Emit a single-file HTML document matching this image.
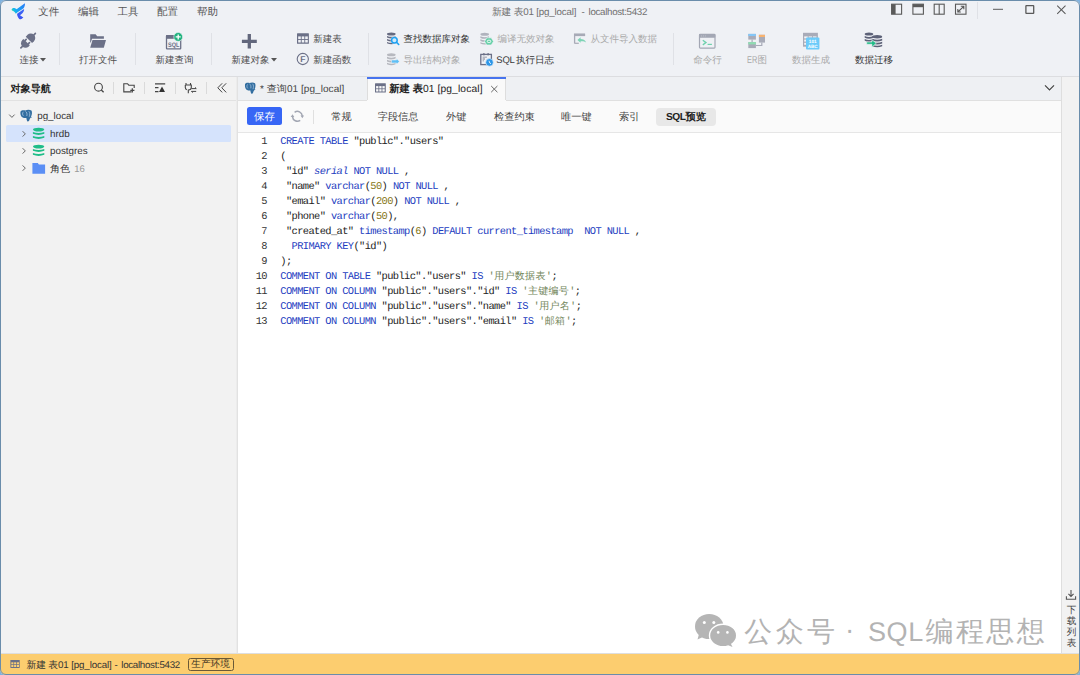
<!DOCTYPE html>
<html><head><meta charset="utf-8">
<style>
*{box-sizing:border-box;margin:0;padding:0}
html,body{width:1080px;height:675px;overflow:hidden;background:#7fb2e0}
body{font-family:"Liberation Sans",sans-serif;position:relative;text-rendering:geometricPrecision}
.a{position:absolute;white-space:pre}
svg.a{overflow:visible}
#win{position:absolute;left:0;top:0;width:1080px;height:675px;border-radius:6px;overflow:hidden;background:#eff1f5}
#frame{position:absolute;left:0;top:0;width:1080px;height:675px;border:1px solid #6a8dab;border-radius:6px;pointer-events:none}
.menu{font-size:10.5px;color:#555;top:6px;line-height:13px}
.tl{font-size:9.5px;color:#4f4f4f;line-height:12px}
.tg{font-size:9.5px;color:#a9a9a9;line-height:12px}
.sep{position:absolute;width:1px;background:#dfe1e6}
.et{font-size:10.2px;line-height:13px;color:#444;top:111px}
#code{position:absolute;left:280.3px;top:134.8px;font-family:"Liberation Mono",monospace;font-size:10.4px;letter-spacing:-0.61px;line-height:15px;color:#222;white-space:pre}
#lns{position:absolute;left:241px;top:134.8px;width:26px;text-align:right;font-family:"Liberation Mono",monospace;font-size:10.4px;letter-spacing:-0.61px;line-height:15px;color:#333;white-space:pre}
.k{color:#1c3cc0}
.n{color:#857514}
.s{color:#72865a}
.cj{letter-spacing:0.32px;font-size:10px;font-weight:300}
</style></head><body>
<div id="win">
  <!-- logo -->
  <svg class="a" style="left:0;top:0" width="30" height="22" viewBox="0 0 30 22">
    <defs><linearGradient id="lg" gradientUnits="userSpaceOnUse" x1="11.5" y1="10" x2="25" y2="3"><stop offset="0" stop-color="#2ad8a8"/><stop offset="0.2" stop-color="#14b0f4"/><stop offset="1" stop-color="#2a78f6"/></linearGradient>
    <linearGradient id="lg2" gradientUnits="userSpaceOnUse" x1="24" y1="9" x2="18" y2="19"><stop offset="0" stop-color="#3d6cf7"/><stop offset="1" stop-color="#3a50f2"/></linearGradient></defs>
    <path d="M11.6 9.6 C11.8 8.3 13.5 7.6 15 8.2 C15.8 8.5 16.3 8.9 16.6 9.3 L24.9 3.2 C25.2 5 24.5 7.2 23.3 8.6 L17.2 12.6 C16.6 13.3 16.1 13.8 15.8 13.8 C15 12.5 14.2 11.4 13.2 11 C12.2 10.8 11.6 10.3 11.6 9.6 Z" fill="url(#lg)"/>
    <path d="M17.4 13.6 L23.6 9.3 C24.2 9.2 24.3 9.8 24 10.6 C23.3 12.6 21.8 14.2 20 15.2 L23.4 17.5 C22 19 20.5 19.4 19.6 19.3 C18.2 18 17.3 16.3 17.1 14.6 C17.1 14.2 17.2 13.8 17.4 13.6 Z" fill="url(#lg2)"/>
  </svg>
  <div class="a menu" style="left:38.3px">文件</div>
  <div class="a menu" style="left:78px">编辑</div>
  <div class="a menu" style="left:117.5px">工具</div>
  <div class="a menu" style="left:157px">配置</div>
  <div class="a menu" style="left:197px">帮助</div>
  <div class="a" style="left:492px;top:7px;font-size:9.75px;line-height:12px;color:#6f6f6f;letter-spacing:-0.17px">新建 表01 [pg_local]</div>
  <div class="a" style="left:581.5px;top:7px;font-size:9.75px;line-height:12px;color:#6f6f6f">-</div>
  <div class="a" style="left:588.6px;top:7px;font-size:9.75px;line-height:12px;color:#6f6f6f;letter-spacing:-0.32px">localhost:5432</div>

  <!-- window controls -->
  <svg class="a" style="left:0;top:0" width="1080" height="22">
    <g fill="none" stroke="#5a5a5a" stroke-width="1.1">
      <rect x="891.6" y="4.2" width="10" height="10"/>
      <rect x="912.9" y="4.2" width="10.5" height="10"/>
      <rect x="934.2" y="4.2" width="10" height="10"/>
      <line x1="939.2" y1="4.2" x2="939.2" y2="14.2"/>
      <rect x="955.5" y="4.2" width="10.5" height="10"/>
      <path d="M957.8 12 L963.8 6.3 M960.8 6.3 H963.8 V9.3 M957.8 9 V12 H960.8"/>
      <line x1="993" y1="9.3" x2="1003" y2="9.3" stroke-width="1"/>
      <rect x="1025.9" y="5.6" width="7.8" height="7.8" stroke-width="1.3" rx="0.5"/>
      <path d="M1057.2 5.7 L1065.5 13.9 M1065.5 5.7 L1057.2 13.9" stroke-width="1.05"/>
    </g>
    <rect x="891.6" y="4.2" width="4" height="10" fill="#5a5a5a"/>
    <rect x="912.9" y="4.2" width="10.5" height="3" fill="#5a5a5a"/>
  </svg>
  <div class="sep" style="left:977px;top:2px;height:16.5px"></div>

  <!-- toolbar separators -->
  <div class="sep" style="left:59px;top:33px;height:32px"></div>
  <div class="sep" style="left:135px;top:33px;height:32px"></div>
  <div class="sep" style="left:211px;top:33px;height:32px"></div>
  <div class="sep" style="left:368px;top:33px;height:32px"></div>
  <div class="sep" style="left:673px;top:33px;height:32px"></div>

  <!-- toolbar icons -->
  <svg class="a" style="left:0;top:25px" width="1080" height="50" viewBox="0 25 1080 50">
    <!-- plug -->
    <g fill="#6b7087" transform="translate(28.2 40.6) rotate(45)">
      <rect x="-0.85" y="-11" width="1.7" height="4" rx="0.85"/>
      <path d="M-4.5 -1 H4.5 V-3.6 A4.5 4.5 0 0 0 -4.5 -3.6 Z"/>
      <rect x="-3.2" y="-0.3" width="1.7" height="3" rx="0.8"/>
      <rect x="1.5" y="-0.3" width="1.7" height="3" rx="0.8"/>
      <path d="M-4.5 2.2 H4.5 V3.8 A4.5 4.5 0 0 1 -4.5 3.8 Z"/>
      <rect x="-0.85" y="7.3" width="1.7" height="3.9" rx="0.85"/>
    </g>
    <!-- folder open -->
    <g fill="#6b7087">
      <path d="M90.2 34.3 H95.6 L97.2 36.2 H103.9 V38.7 H92 L90.8 42.5 H90.2 Z"/>
      <path d="M92.5 40 H106 L103.8 47.8 H90.2 Z"/>
    </g>
    <!-- new query SQL -->
    <g>
      <rect x="166.5" y="35.6" width="14.2" height="13.2" fill="none" stroke="#6b7087" stroke-width="1.3" rx="0.6"/>
      <rect x="166" y="35.2" width="15.2" height="3.6" fill="#6b7087"/>
      <text x="168" y="46.8" font-family="Liberation Sans" font-size="6.6" font-weight="bold" fill="#6b7087" textLength="11.4" lengthAdjust="spacingAndGlyphs">SQL</text>
      <circle cx="178.2" cy="36.9" r="4.4" fill="#20b27e" stroke="#eff1f5" stroke-width="0.6"/>
      <path d="M178.2 34.4 V39.4 M175.7 36.9 H180.7" stroke="#fff" stroke-width="1.3"/>
    </g>
    <!-- plus -->
    <path d="M249.3 34 V48.6 M241.9 41.3 H256.8" stroke="#62677c" stroke-width="3.3"/>
    <!-- small table -->
    <g>
      <rect x="297" y="33.3" width="11.9" height="10.5" fill="#6b7087" rx="0.5"/>
      <g fill="#eff1f5">
        <rect x="298.2" y="36.4" width="2.6" height="2.6"/><rect x="301.7" y="36.4" width="2.6" height="2.6"/><rect x="305.2" y="36.4" width="2.6" height="2.6"/>
        <rect x="298.2" y="39.9" width="2.6" height="2.6"/><rect x="301.7" y="39.9" width="2.6" height="2.6"/><rect x="305.2" y="39.9" width="2.6" height="2.6"/>
      </g>
    </g>
    <!-- F circle -->
    <circle cx="302.8" cy="59" r="5.6" fill="none" stroke="#6b7087" stroke-width="1.1"/>
    <text x="302.9" y="62.4" font-family="Liberation Sans" font-size="8.5" font-weight="bold" fill="#6b7087" text-anchor="middle">F</text>
    <!-- db search -->
    <g fill="#656a80">
      <ellipse cx="391.3" cy="33.9" rx="4.3" ry="1.5"/>
      <path d="M387 35.9 Q391.3 37.8 395.6 35.9 V37.6 Q391.3 39.5 387 37.6 Z"/>
      <path d="M387 38.9 Q391.3 40.8 395.6 38.9 V40.6 Q391.3 42.5 387 40.6 Z"/>
      <path d="M387 41.9 Q391.3 43.8 395.6 41.9 V43.3 Q391.3 45.2 387 43.3 Z"/>
    </g>
    <circle cx="394.4" cy="40.2" r="3.6" fill="#eff1f5"/>
    <circle cx="394.4" cy="40.2" r="2.8" fill="#cfe9fb" stroke="#1ea1f2" stroke-width="1.5"/>
    <path d="M396.5 42.3 L398.7 44.5" stroke="#1ea1f2" stroke-width="1.6" stroke-linecap="round"/>
    <!-- db export -->
    <g fill="#b6b8bf">
      <ellipse cx="391.3" cy="54.8" rx="4.3" ry="1.5"/>
      <path d="M387 56.8 Q391.3 58.7 395.6 56.8 V58.5 Q391.3 60.4 387 58.5 Z"/>
      <path d="M387 59.8 Q391.3 61.7 395.6 59.8 V61.5 Q391.3 63.4 387 61.5 Z"/>
      <path d="M387 62.8 Q391.3 64.7 395.6 62.8 V64.2 Q391.3 66.1 387 64.2 Z"/>
    </g>
    <path d="M391.5 60 H396.5 V58.6 L399.4 61.5 L396.5 64.3 V62.9 H391.5 Z" fill="#5fbff5" stroke="#eff1f5" stroke-width="0.5"/>
    <!-- db compile -->
    <g fill="#b0b3bd">
      <ellipse cx="484.7" cy="34.2" rx="4.3" ry="1.5"/>
      <path d="M480.4 36.2 Q484.7 38.1 489 36.2 V37.9 Q484.7 39.8 480.4 37.9 Z"/>
      <path d="M480.4 39.2 Q484.7 41.1 489 39.2 V40.9 Q484.7 42.8 480.4 40.9 Z"/>
      <path d="M480.4 42.2 Q484.7 44.1 489 42.2 V43.6 Q484.7 45.5 480.4 43.6 Z"/>
    </g>
    <path d="M486.7 37.8 H491.3 L493.5 41.4 L491.3 45 H486.7 L484.5 41.4 Z" fill="#66d0a8" stroke="#eff1f5" stroke-width="0.7"/>
    <rect x="487.3" y="40.3" width="3.4" height="2.2" rx="1" fill="none" stroke="#fff" stroke-width="0.9"/>
    <!-- sql log -->
    <g>
      <rect x="480.8" y="54.4" width="10.6" height="10.2" fill="none" stroke="#6b7087" stroke-width="1.3"/>
      <rect x="483.3" y="53" width="1.2" height="2.4" fill="#6b7087"/><rect x="487.5" y="53" width="1.2" height="2.4" fill="#6b7087"/>
      <path d="M482.6 56.5 H486.9 V58 H485 V60 H484 V61.5 H482.6 Z" fill="#b4b7c2"/>
      <circle cx="489.5" cy="62.4" r="3.8" fill="#2c96e8" stroke="#eff1f5" stroke-width="0.6"/>
      <path d="M489 60.8 L489.8 63 L491 63.8" stroke="#fff" stroke-width="0.8" fill="none"/>
    </g>
    <!-- import from file -->
    <g>
      <path d="M574.6 43.6 V34.3 H584.5 V36" fill="none" stroke="#a7aab6" stroke-width="1.3"/>
      <rect x="574" y="33.6" width="11" height="2.5" fill="#a7aab6"/>
      <path d="M574.6 43.3 H578.8" stroke="#a7aab6" stroke-width="1.2"/>
      <path d="M577.4 40.1 L580.6 37.2 V38.9 C583 38.9 585 39.8 586.1 42.4 C584.8 41.3 583 41.1 580.6 41.2 V42.8 Z" fill="#7dd3b5"/>
    </g>
    <!-- command line -->
    <g>
      <rect x="699.5" y="34.4" width="15.5" height="13.7" fill="none" stroke="#a3a7b4" stroke-width="1.2" rx="0.8"/>
      <rect x="699" y="33.9" width="16.3" height="3.9" fill="#a3a7b4" rx="0.8"/>
      <circle cx="701.4" cy="35.9" r="0.45" fill="#e6e8ee"/><circle cx="703.3" cy="35.9" r="0.45" fill="#e6e8ee"/><circle cx="705.3" cy="35.9" r="0.45" fill="#e6e8ee"/>
      <path d="M702.8 40.3 L706 42.6 L702.8 44.9" fill="none" stroke="#6fd1ad" stroke-width="1.3"/>
      <path d="M707.6 44.4 H711.9" stroke="#6fd1ad" stroke-width="1.2"/>
    </g>
    <!-- ER -->
    <g>
      <path d="M752.1 39.6 V42.1 M755.9 45.5 H761.8 V42.6" fill="none" stroke="#a8abb8" stroke-width="1.2"/>
      <rect x="748.3" y="33.9" width="7.6" height="5.7" fill="#a8abb8"/>
      <rect x="748.3" y="33.9" width="7.6" height="2.1" fill="#84c6f7"/>
      <rect x="748.3" y="42.1" width="7.6" height="6" fill="#a8abb8"/>
      <rect x="748.3" y="42.1" width="7.6" height="2.3" fill="#8fdcb2"/>
      <rect x="758.9" y="34.8" width="6.1" height="7.8" fill="#a8abb8"/>
      <rect x="758.9" y="34.8" width="6.1" height="2.2" fill="#f7b26f"/>
    </g>
    <!-- data gen -->
    <g>
      <rect x="803" y="32.8" width="14.9" height="13.9" fill="#a8abb8"/>
      <g fill="#f3f4f7"><rect x="804.2" y="36.4" width="3.5" height="2"/><rect x="804.2" y="39.6" width="3.5" height="2"/><rect x="804.2" y="42.8" width="3.5" height="2"/><rect x="808.6" y="36.4" width="3.5" height="1.2"/><rect x="813" y="36.4" width="3.5" height="1.2"/></g>
      <rect x="806" y="37.6" width="13.4" height="11.8" fill="#6ccbfa" rx="1"/>
      <text x="812.7" y="42.8" font-family="Liberation Sans" font-size="4.6" font-weight="bold" fill="#fff" text-anchor="middle">101</text>
      <text x="812.7" y="47.7" font-family="Liberation Sans" font-size="4.6" font-weight="bold" fill="#fff" text-anchor="middle">ABC</text>
    </g>
    <!-- migration -->
    <g transform="translate(-0.9 -0.6)"><g fill="#5d6278">
      <ellipse cx="869.9" cy="34.6" rx="4.3" ry="1.6"/>
      <path d="M865.6 36.6 Q869.9 38.5 874.2 36.6 V38.3 Q869.9 40.2 865.6 38.3 Z"/>
      <path d="M865.6 39.6 Q869.9 41.5 874.2 39.6 V41.3 Q869.9 43.2 865.6 41.3 Z"/>
      <ellipse cx="878.1" cy="37.3" rx="5" ry="1.7"/>
      <path d="M873.1 39.4 Q878.1 41.4 883.1 39.4 V41.2 Q878.1 43.2 873.1 41.2 Z"/>
      <path d="M873.1 42.4 Q878.1 44.4 883.1 42.4 V44.2 Q878.1 46.2 873.1 44.2 Z"/>
      <path d="M873.1 45.4 Q878.1 47.4 883.1 45.4 V46.8 Q878.1 48.8 873.1 46.8 Z"/>
    </g>
    <path d="M867.6 42.6 H872.8 V40.3 L877.2 43.8 L872.8 47.8 V44.9 H867.6 Z" fill="#22bb88" stroke="#eff1f5" stroke-width="0.6"/></g>
  </svg>

  <!-- toolbar labels -->
  <div class="a tl" style="left:19.5px;top:55px">连接</div>
  <svg class="a" style="left:39.8px;top:58px" width="7" height="5"><path d="M0 0 H6 L3 3.6 Z" fill="#555"/></svg>
  <div class="a tl" style="left:79px;top:55px">打开文件</div>
  <div class="a tl" style="left:155.5px;top:55px">新建查询</div>
  <div class="a tl" style="left:231.5px;top:55px">新建对象</div>
  <svg class="a" style="left:271.3px;top:58px" width="7" height="5"><path d="M0 0 H6 L3 3.6 Z" fill="#555"/></svg>
  <div class="a tl" style="left:313.3px;top:34px">新建表</div>
  <div class="a tl" style="left:313.3px;top:54.5px">新建函数</div>
  <div class="a tl" style="left:403.5px;top:34px;color:#333">查找数据库对象</div>
  <div class="a tg" style="left:403.5px;top:54.5px">导出结构对象</div>
  <div class="a tg" style="left:497.5px;top:34px">编译无效对象</div>
  <div class="a tl" style="left:496.3px;top:54.5px;color:#3a3a3a;letter-spacing:-0.25px">SQL</div>
  <div class="a tl" style="left:516px;top:54.5px;color:#333">执行日志</div>
  <div class="a tg" style="left:590.5px;top:34px">从文件导入数据</div>
  <div class="a tg" style="left:693.3px;top:55px">命令行</div>
  <div class="a tg" style="left:747px;top:54.5px;font-size:10px;transform:scaleX(0.74);transform-origin:0 0">ER</div>
  <div class="a tg" style="left:757.5px;top:55px">图</div>
  <div class="a tg" style="left:792px;top:55px">数据生成</div>
  <div class="a tl" style="left:855px;top:55px;color:#333">数据迁移</div>

  <!-- toolbar bottom border -->
  <div class="a" style="left:0;top:76px;width:1080px;height:1px;background:#dcdde0"></div>

  <!-- left panel -->
  <div class="a" style="left:0;top:77px;width:237px;height:577px;background:#f2f2f2"></div>
  <div class="a" style="left:0;top:100px;width:237px;height:1px;background:#e2e2e2"></div>
  <div class="a" style="left:236px;top:77px;width:1px;height:577px;background:#ececec"></div>
  <div class="a" style="left:237px;top:77px;width:1px;height:577px;background:#e2e2e2"></div>
  <div class="a" style="left:10.5px;top:83.2px;font-size:10.1px;line-height:13px;font-weight:bold;color:#222">对象导航</div>
  <svg class="a" style="left:0;top:77px" width="237" height="23" viewBox="0 77 237 23">
    <g fill="none" stroke="#444" stroke-width="1.1">
      <circle cx="98.5" cy="87.2" r="3.9"/>
      <path d="M101.3 90 L103.6 92.3" stroke-width="1.3"/>
      <path d="M131.5 91.9 H123.8 V83.7 H127.5 L128.8 85.2 H134.2 V88" />
      <path d="M132.3 88.3 V92.4 M130.3 90.4 H134.4" stroke-width="1.2"/>
      <path d="M155 83.9 H165.2" stroke-width="1.4"/>
      <path d="M155 87.7 H158.5 M155 91.6 H158.5" stroke-width="1.2"/>
      <path d="M186 83 V84.8 M190.5 83 V84.8 M185.3 85 H191.3 V87.5 C191.3 89.2 190 90 188.3 90 V93.2 M185.3 85 V87.5 C185.3 88.5 185.8 89.3 186.8 89.7" stroke-width="1.1"/>
      <path d="M191.5 88.6 H196.2 M195 87.4 L196.3 88.6 M191.5 91.4 H196.2 M192.7 92.6 L191.4 91.4" stroke-width="1"/>
      <path d="M222.2 83.3 L217.8 87.8 L222.2 92.4 M226.2 83.3 L221.8 87.8 L226.2 92.4" stroke-width="1"/>
    </g>
    <path d="M159 92 L162 86.6 L165 92 Z" fill="#333"/>
  </svg>
  <div class="sep" style="left:113px;top:82px;height:12px;background:#dadada"></div>
  <div class="sep" style="left:144px;top:82px;height:12px;background:#dadada"></div>
  <div class="sep" style="left:175px;top:82px;height:12px;background:#dadada"></div>
  <div class="sep" style="left:206px;top:82px;height:12px;background:#dadada"></div>

  <!-- tree -->
  <div class="a" style="left:6px;top:125px;width:224.5px;height:17px;background:#d5e3fc;border-radius:1.5px"></div>
  <svg class="a" style="left:0;top:105px" width="237" height="75" viewBox="0 105 237 75">
    <path d="M9.2 114.6 L11.9 117.4 L14.6 114.6" fill="none" stroke="#666" stroke-width="1"/>
    <path d="M22.6 131.2 L25.3 133.9 L22.6 136.6 M22.6 148.2 L25.3 150.9 L22.6 153.6 M22.6 165.4 L25.3 168.1 L22.6 170.8" fill="none" stroke="#666" stroke-width="1"/>
    <!-- elephant -->
    <g transform="translate(17.14 107.36) scale(1.1 1.02)"><path d="M3 4.5 C3 2.8 5.5 2.4 7.5 3 C9 2.3 11.5 2.1 13 3.2 C13.8 4.5 13.6 7.5 12.6 9.2 L13.6 9.8 L12.2 10.2 C11.6 11 11.2 12 11 13 C10.7 13.8 9.8 14 9.2 13.5 C8.6 12.5 8.5 11.5 8.4 10.4 C6.5 10.8 4.5 10.2 3.6 8.5 C3 7.3 2.9 5.8 3 4.5 Z" fill="#336ea0"/>
    <path d="M5.6 4.4 C4.6 5.5 4.8 7.6 5.8 8.4 M7.6 4 C8.8 4.6 9.2 6.2 8.8 8.4 M10.6 3.8 C11.7 5 11.7 7.2 11 9.2" fill="none" stroke="#a9c6e2" stroke-width="0.75"/></g>
    <!-- db icons -->
    <g fill="#1fbd88">
      <ellipse cx="38.6" cy="129.6" rx="5.65" ry="1.9"/>
      <path d="M32.9 131.9 Q38.6 134.2 44.3 131.9 V133.8 Q38.6 136.1 32.9 133.8 Z"/>
      <path d="M32.9 135.9 Q38.6 138.2 44.3 135.9 V137.8 Q38.6 140.1 32.9 137.8 Z"/>
      <ellipse cx="38.6" cy="146.6" rx="5.65" ry="1.9"/>
      <path d="M32.9 148.9 Q38.6 151.2 44.3 148.9 V150.8 Q38.6 153.1 32.9 150.8 Z"/>
      <path d="M32.9 152.9 Q38.6 155.2 44.3 152.9 V154.8 Q38.6 157.1 32.9 154.8 Z"/>
    </g>
    <path d="M32.4 163.1 H37.8 L38.9 164.5 H45.1 V173.7 H32.4 Z" fill="#5b8ff5"/>
  </svg>
  <div class="a" style="left:37.2px;top:110px;font-size:9.8px;line-height:13px;color:#333">pg_local</div>
  <div class="a" style="left:50px;top:128px;font-size:9.8px;line-height:13px;color:#333">hrdb</div>
  <div class="a" style="left:50px;top:145px;font-size:9.8px;line-height:13px;color:#333">postgres</div>
  <div class="a" style="left:50px;top:162.5px;font-size:10px;line-height:13px;color:#333">角色 <span style="font-size:9.5px;color:#999;margin-left:1.5px">16</span></div>

  <!-- tab bar -->
  <div class="a" style="left:238px;top:77px;width:823px;height:23px;background:#eef0f3"></div>
  <div class="a" style="left:238px;top:100px;width:823px;height:1px;background:#e0e0e0"></div>
  <div class="a" style="left:367px;top:77px;width:139px;height:24px;background:#f9f9f9;border-left:1px solid #ddd;border-right:1px solid #ddd"></div>
  <div class="a" style="left:367px;top:77px;width:139px;height:2px;background:#4673ee"></div>
  <svg class="a" style="left:238px;top:77px" width="823" height="23" viewBox="238 77 823 23">
    <g transform="translate(242 80)"><path d="M3 4.5 C3 2.8 5.5 2.4 7.5 3 C9 2.3 11.5 2.1 13 3.2 C13.8 4.5 13.6 7.5 12.6 9.2 L13.6 9.8 L12.2 10.2 C11.6 11 11.2 12 11 13 C10.7 13.8 9.8 14 9.2 13.5 C8.6 12.5 8.5 11.5 8.4 10.4 C6.5 10.8 4.5 10.2 3.6 8.5 C3 7.3 2.9 5.8 3 4.5 Z" fill="#336ea0"/>
    <path d="M5.6 4.4 C4.6 5.5 4.8 7.6 5.8 8.4 M7.6 4 C8.8 4.6 9.2 6.2 8.8 8.4 M10.6 3.8 C11.7 5 11.7 7.2 11 9.2" fill="none" stroke="#a9c6e2" stroke-width="0.75"/></g>
    <rect x="375" y="83.3" width="10.8" height="9.2" fill="#6b7087" rx="0.5"/>
    <g fill="#f9f9f9">
      <rect x="376.1" y="86.1" width="2.3" height="2.3"/><rect x="379.25" y="86.1" width="2.3" height="2.3"/><rect x="382.4" y="86.1" width="2.3" height="2.3"/>
      <rect x="376.1" y="89.2" width="2.3" height="2.3"/><rect x="379.25" y="89.2" width="2.3" height="2.3"/><rect x="382.4" y="89.2" width="2.3" height="2.3"/>
    </g>
    <path d="M491.2 86 L497.4 92.2 M497.4 86 L491.2 92.2" stroke="#666" stroke-width="1"/>
    <path d="M1045 85.4 L1049.5 90 L1054 85.4" fill="none" stroke="#444" stroke-width="1.2"/>
  </svg>
  <div class="a" style="left:260px;top:82.7px;font-size:10px;line-height:13px;color:#444;letter-spacing:0.06px">* 查询01 [pg_local]</div>
  <div class="a" style="left:389.3px;top:82.5px;font-size:10.25px;line-height:13px;color:#222"><b>新建 表</b><span style="letter-spacing:0.12px">01 [pg_local]</span></div>

  <!-- editor toolbar -->
  <div class="a" style="left:238px;top:101px;width:823px;height:31px;background:#fafafa"></div>
  <div class="a" style="left:367px;top:100px;width:139px;height:1px;background:#fafafa"></div>
  <div class="a" style="left:238px;top:132px;width:823px;height:1px;background:#e6e6e6"></div>
  <div class="a" style="left:247px;top:107px;width:34.8px;height:17.5px;background:#3766f5;border-radius:2.5px;color:#fff;font-size:10.5px;line-height:17px;padding-top:2px;text-align:center">保存</div>
  <svg class="a" style="left:288px;top:108px" width="18" height="18" viewBox="288 108 18 18">
    <path d="M294.6 112.3 A4.9 4.9 0 0 1 302.3 116" fill="none" stroke="#a3a7b3" stroke-width="1.5"/>
    <path d="M300.2 120.3 A4.9 4.9 0 0 1 292.5 116.6" fill="none" stroke="#a3a7b3" stroke-width="1.5"/>
    <path d="M300.5 115.5 H304.1 L302.3 118.3 Z M290.7 117.1 H294.3 L292.5 114.3 Z" fill="#a3a7b3"/>
  </svg>
  <div class="sep" style="left:313px;top:110px;height:14px;background:#e0e0e0"></div>
  <div class="a et" style="left:331.2px">常规</div>
  <div class="a et" style="left:377.7px">字段信息</div>
  <div class="a et" style="left:446px">外键</div>
  <div class="a et" style="left:494px">检查约束</div>
  <div class="a et" style="left:561px">唯一键</div>
  <div class="a et" style="left:619px">索引</div>
  <div class="a" style="left:656.4px;top:108.3px;width:59.6px;height:17.3px;background:#e8e8e8;border-radius:4px"></div>
  <div class="a et" style="left:666px;color:#222;font-weight:bold"><span style="letter-spacing:-0.45px">SQL</span>预览</div>

  <!-- editor -->
  <div class="a" style="left:238px;top:133px;width:823px;height:521px;background:#fff"></div>
  <div id="lns">1
2
3
4
5
6
7
8
9
10
11
12
13</div>
  <div id="code"><span class="k">CREATE TABLE</span> "public"."users"
(
 "id" <i class="k">serial</i> <span class="k">NOT NULL</span> ,
 "name" <span class="k">varchar</span>(<span class="n">50</span>) <span class="k">NOT NULL</span> ,
 "email" <span class="k">varchar</span>(<span class="n">200</span>) <span class="k">NOT NULL</span> ,
 "phone" <span class="k">varchar</span>(<span class="n">50</span>),
 "created_at" <span class="k">timestamp</span>(<span class="n">6</span>) <span class="k">DEFAULT current_timestamp</span>  <span class="k">NOT NULL</span> ,
  <span class="k">PRIMARY KEY</span>("id")
);
<span class="k">COMMENT ON TABLE</span> "public"."users" <span class="k">IS</span> <span class="s">'<span class="cj">用户数据表</span>'</span>;
<span class="k">COMMENT ON COLUMN</span> "public"."users"."id" <span class="k">IS</span> <span class="s">'<span class="cj">主键编号</span>'</span>;
<span class="k">COMMENT ON COLUMN</span> "public"."users"."name" <span class="k">IS</span> <span class="s">'<span class="cj">用户名</span>'</span>;
<span class="k">COMMENT ON COLUMN</span> "public"."users"."email" <span class="k">IS</span> <span class="s">'<span class="cj">邮箱</span>'</span>;</div>

  <!-- watermark -->
  <svg class="a" style="left:690px;top:608px" width="50" height="42" viewBox="690 608 50 42">
    <ellipse cx="709.2" cy="626.5" rx="14.2" ry="12.6" fill="#b5b5b5"/>
    <path d="M699 634 L697.5 639.5 L704 636.5 Z" fill="#b5b5b5"/>
    <ellipse cx="723.1" cy="635.5" rx="13.6" ry="11.2" fill="#b5b5b5" stroke="#fff" stroke-width="1.4"/>
    <path d="M730.5 643 L732.5 647 L727 644.8 Z" fill="#b5b5b5"/>
    <circle cx="704.3" cy="622.6" r="1.5" fill="#fff"/><circle cx="713.8" cy="622.6" r="1.5" fill="#fff"/>
    <circle cx="718.2" cy="632.4" r="1.3" fill="#fff"/><circle cx="727.4" cy="632.4" r="1.3" fill="#fff"/>
  </svg>
  <div class="a" style="left:744.3px;top:613.5px;font-size:28px;line-height:36px;color:#b3b3b3;letter-spacing:3.4px;font-weight:500">公众号</div>
  <div class="a" style="left:845px;top:612px;font-size:28px;line-height:36px;color:#b3b3b3;font-weight:500">·</div>
  <div class="a" style="left:868px;top:613.5px;font-size:27px;line-height:36px;color:#b3b3b3;letter-spacing:0.6px">SQL</div>
  <div class="a" style="left:925.5px;top:613.5px;font-size:28px;line-height:36px;color:#b3b3b3;letter-spacing:2.4px;font-weight:500">编程思想</div>

  <!-- right strip -->
  <div class="a" style="left:1061px;top:77px;width:18px;height:577px;background:#f2f2f2;border-left:1px solid #dedede"></div>
  <svg class="a" style="left:1062px;top:586px" width="17" height="16" viewBox="1062 586 17 16">
    <path d="M1071 590 V596.2 M1068.4 593.8 L1071 596.4 L1073.6 593.8" fill="none" stroke="#555" stroke-width="1.1"/>
    <path d="M1066.4 596.3 V599.3 H1075.6 V596.3" fill="none" stroke="#555" stroke-width="1.1"/>
  </svg>
  <div class="a" style="left:1066.8px;top:605.2px;width:10px;font-size:9.6px;line-height:11.1px;color:#444;white-space:normal;word-break:break-all">下载列表</div>

  <!-- status bar -->
  <div class="a" style="left:0;top:653px;width:1080px;height:1px;background:#dedede"></div>
  <div class="a" style="left:0;top:654px;width:1080px;height:21px;background:#fccd6f"></div>
  <svg class="a" style="left:9px;top:659px" width="12" height="10" viewBox="9 659 12 10">
    <rect x="10.4" y="660" width="9.3" height="8" fill="#6b7087" rx="0.4"/>
    <g fill="#fdd072">
      <rect x="11.3" y="662.3" width="2.1" height="2"/><rect x="14.1" y="662.3" width="2.1" height="2"/><rect x="16.9" y="662.3" width="2.1" height="2"/>
      <rect x="11.3" y="665" width="2.1" height="2"/><rect x="14.1" y="665" width="2.1" height="2"/><rect x="16.9" y="665" width="2.1" height="2"/>
    </g>
  </svg>
  <div class="a" style="left:26.5px;top:659.5px;font-size:9.75px;line-height:12px;color:#333;letter-spacing:-0.12px">新建 表01 [pg_local]</div>
  <div class="a" style="left:114.6px;top:659.5px;font-size:9.75px;line-height:12px;color:#333">-</div>
  <div class="a" style="left:121.3px;top:659.5px;font-size:9.75px;line-height:12px;color:#333;letter-spacing:-0.3px">localhost:5432</div>
  <div class="a" style="left:187.5px;top:658px;width:46.4px;height:12.8px;border:1px solid #6a5936;border-radius:2.5px"></div>
  <div class="a" style="left:191.3px;top:659.1px;font-size:9.6px;line-height:12px;color:#3a3020;letter-spacing:0.05px">生产环境</div>
</div>
<div id="frame"></div>
</body></html>
